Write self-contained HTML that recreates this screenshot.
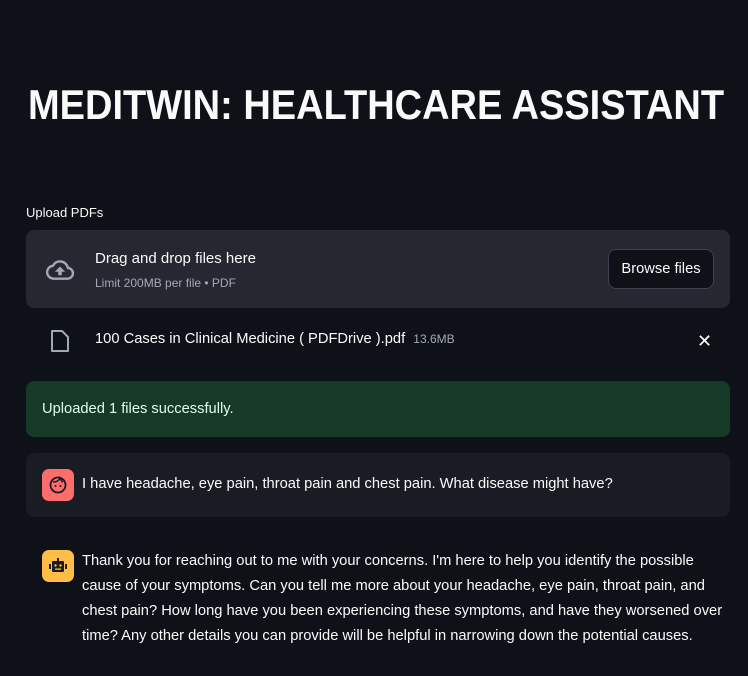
<!DOCTYPE html>
<html><head><style>
body{margin:0;width:748px;height:676px;background:#0e1117;color:#fafafa;font-family:"Liberation Sans",sans-serif;overflow:hidden;position:relative}
.abs{position:absolute}
h1{position:absolute;left:28px;top:80px;margin:0;font-size:42px;font-weight:bold;line-height:50px;white-space:nowrap;transform:scaleX(0.905);transform-origin:left}
.t{font-size:14.7px;white-space:nowrap}
</style></head><body>
<h1>MEDITWIN: HEALTHCARE ASSISTANT</h1>
<div class="abs" style="left:26px;top:205px;font-size:13px">Upload PDFs</div>
<div class="abs" style="left:26px;top:230px;width:704px;height:78px;background:#262730;border-radius:8px"></div>
<svg class="abs" style="left:42px;top:256px" width="36" height="28" viewBox="0 0 24 24"><path fill="none" stroke="#a3a8b8" stroke-width="2.2" d="M19.35 10.04A7.49 7.49 0 0 0 12 4C9.11 4 6.6 5.64 5.35 8.04A5.994 5.994 0 0 0 0 14c0 3.310 2.69 6 6 6h13c2.76 0 5-2.24 5-5 0-2.64-2.05-4.78-4.65-4.96z" transform="translate(1,1) scale(0.92)"/><path fill="#a3a8b8" d="M7.5 13.5h3v3h3v-3h3L12 9z"/></svg>
<div class="abs t" style="left:95px;top:250px;font-size:15px">Drag and drop files here</div>
<div class="abs" style="left:95px;top:276px;font-size:12px;color:#a3a8b8">Limit 200MB per file • PDF</div>
<div class="abs" style="left:608px;top:249px;width:104px;height:38px;border:1px solid #3d4150;border-radius:8px;background:#0e1117;font-size:14.7px;line-height:38px;text-align:center">Browse files</div>
<svg class="abs" style="left:49px;top:329px" width="22" height="24" viewBox="0 0 22 24"><path d="M3 2h10l6 6v14H3z" fill="none" stroke="#a3a8b8" stroke-width="2" stroke-linejoin="round"/></svg>
<div class="abs t" style="left:95px;top:331px">100 Cases in Clinical Medicine ( PDFDrive ).pdf <span style="font-size:12px;color:#a3a8b8;margin-left:4px">13.6MB</span></div>
<div class="abs" style="left:697px;top:331px;font-size:18px;color:#fafafa">✕</div>
<div class="abs" style="left:26px;top:381px;width:704px;height:56px;background:#173928;border-radius:8px"></div>
<div class="abs t" style="left:42px;top:401px;color:#dffde9">Uploaded 1 files successfully.</div>
<div class="abs" style="left:26px;top:453px;width:704px;height:64px;background:#1a1c24;border-radius:8px"></div>
<div class="abs" style="left:42px;top:469px;width:32px;height:32px;background:#ff6c6c;border-radius:7px"></div>
<svg class="abs" style="left:48px;top:475px" width="20" height="20" viewBox="0 0 20 20"><circle cx="10" cy="10" r="7.5" fill="none" stroke="#1a1c24" stroke-width="1.8"/><path d="M5 7c3 0 6-1 7-4 1 2 2 4 3 4" fill="none" stroke="#1a1c24" stroke-width="1.6"/><circle cx="7.5" cy="11" r="1" fill="#1a1c24"/><circle cx="12.5" cy="11" r="1" fill="#1a1c24"/></svg>
<div class="abs t" style="left:82px;top:476px">I have headache, eye pain, throat pain and chest pain. What disease might have?</div>
<div class="abs" style="left:42px;top:550px;width:32px;height:32px;background:#ffbd45;border-radius:7px"></div>
<svg class="abs" style="left:48px;top:556px" width="20" height="20" viewBox="0 0 20 20"><rect x="4" y="5" width="12" height="11" rx="1" fill="#1a1c24"/><rect x="1" y="8" width="2" height="5" fill="#1a1c24"/><rect x="17" y="8" width="2" height="5" fill="#1a1c24"/><rect x="9" y="2" width="2" height="3" fill="#1a1c24"/><circle cx="7.5" cy="9.5" r="1.2" fill="#ffbd45"/><circle cx="12.5" cy="9.5" r="1.2" fill="#ffbd45"/><rect x="7" y="12.5" width="6" height="1.3" fill="#ffbd45"/></svg>
<div class="abs" style="left:82px;top:549px;width:652px;font-size:14.7px;line-height:25px">Thank you for reaching out to me with your concerns. I'm here to help you identify the possible cause of your symptoms. Can you tell me more about your headache, eye pain, throat pain, and chest pain? How long have you been experiencing these symptoms, and have they worsened over time? Any other details you can provide will be helpful in narrowing down the potential causes.</div>
</body></html>
